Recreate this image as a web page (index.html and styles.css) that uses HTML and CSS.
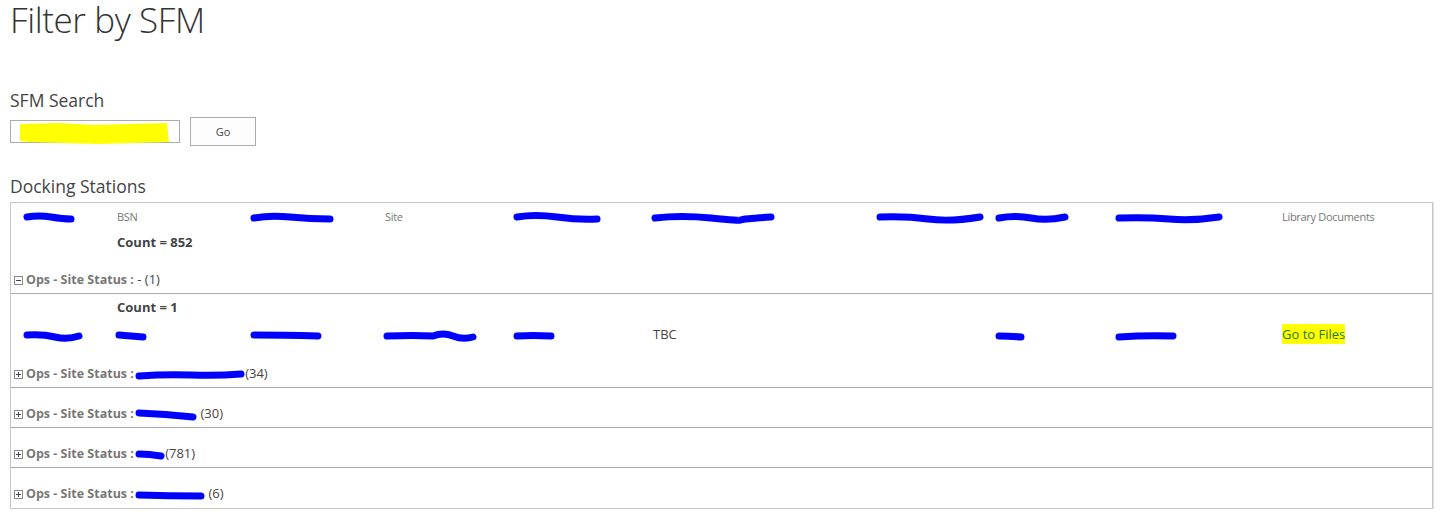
FILE: index.html
```html
<!DOCTYPE html>
<html><head><meta charset="UTF-8" /><link rel="stylesheet" href="styles.css"><title>Filter by SFM</title></head>
<body>
<div class="page">
	<h1 class="title">Filter by SFM</h1>

	<h2 class="section">SFM Search</h2>
	<div class="search">
		<div class="field">
			<!-- highlighter over the typed value -->
			<svg width="152" height="22" viewBox="0 0 152 22"><path class="hl" d="M1 2 L40 1 L75 3 L110 2 L148 1 L150 20 L115 21 L80 22 L45 21 L10 20 L1 19 Z" /></svg>
		</div>
		<button class="go">Go</button>
	</div>

	<h2 class="section">Docking Stations</h2>
	<table class="list">
		<colgroup>
			<col class="c1"><col class="c2"><col class="c3"><col class="c4"><col class="c5">
			<col class="c6"><col class="c7"><col class="c8"><col class="c9"><col class="c10">
		</colgroup>
		<tr class="head">
			<td class="first"><svg class="mark" width="52" height="12"><path d="M4 5 Q16 3 28 5 T48 7" /></svg></td>
			<td>BSN</td>
			<td><svg class="mark" width="84" height="12"><path d="M4 6 Q20 3 40 5 T80 7" /></svg></td>
			<td>Site</td>
			<td><svg class="mark" width="88" height="12"><path d="M4 5 Q22 2 44 5 T84 7" /></svg></td>
			<td><svg class="mark" width="124" height="14"><path d="M4 7 Q30 4 60 7 T90 9 T120 6" /></svg></td>
			<td><svg class="mark" width="108" height="12"><path d="M4 5 Q30 4 52 7 T104 5" /></svg></td>
			<td><svg class="mark" width="74" height="12"><path d="M4 6 Q20 3 36 6 T70 5" /></svg></td>
			<td><svg class="mark" width="108" height="12"><path d="M4 6 Q30 5 54 7 T104 5" /></svg></td>
			<td>Library Documents</td>
		</tr>
		<tr class="count">
			<td class="first"></td>
			<td colspan="9"><b>Count = 852</b></td>
		</tr>
		<tr class="group">
			<td colspan="10"><div class="gh"><span class="tog minus"></span><b>Ops - Site Status :</b> <span class="val">- (1)</span></div></td>
		</tr>
		<tr class="count sub">
			<td class="first"></td>
			<td colspan="9"><b>Count = 1</b></td>
		</tr>
		<tr class="row">
			<td class="first"><svg class="mark" width="60" height="12"><path d="M4 5 Q20 4 32 7 T56 6" /></svg></td>
			<td><svg class="mark" width="32" height="12"><path d="M4 5 Q16 6 28 7" /></svg></td>
			<td><svg class="mark" width="72" height="12"><path d="M4 5 Q34 5 68 6" /></svg></td>
			<td><svg class="mark" width="94" height="14"><path d="M4 7 Q30 6 50 7 Q60 3 70 7 T90 8" /></svg></td>
			<td><svg class="mark" width="42" height="12"><path d="M4 6 Q20 5 38 6" /></svg></td>
			<td>TBC</td>
			<td></td>
			<td><svg class="mark" width="30" height="12"><path d="M4 6 Q14 6 26 7" /></svg></td>
			<td><svg class="mark" width="62" height="12"><path d="M4 7 Q30 5 58 6" /></svg></td>
			<td><a class="files" href="#">Go to Files</a></td>
		</tr>
		<tr class="group">
			<td colspan="10"><div class="gh"><span class="tog"></span><b>Ops - Site Status : <svg class="mark" width="110" height="12"><path d="M4 7 Q30 5 56 6 T106 5" /></svg></b><span class="val">(34)</span></div></td>
		</tr>
		<tr class="group">
			<td colspan="10"><div class="gh"><span class="tog"></span><b>Ops - Site Status : <svg class="mark" width="62" height="14"><path d="M4 5 Q30 6 58 9" /></svg></b> <span class="val">(30)</span></div></td>
		</tr>
		<tr class="group">
			<td colspan="10"><div class="gh"><span class="tog"></span><b>Ops - Site Status : <svg class="mark" width="30" height="12"><path d="M4 5 Q14 5 26 7" /></svg></b><span class="val">(781)</span></div></td>
		</tr>
		<tr class="group last">
			<td colspan="10"><div class="gh"><span class="tog"></span><b>Ops - Site Status : <svg class="mark" width="70" height="14"><path d="M4 7 Q34 8 66 8" /></svg></b> <span class="val">(6)</span></div></td>
		</tr>
	</table>
</div>
</body></html>
```
FILE: styles.css
```css
body { margin: 0; background: #fff; color: #444;
	font-family: "Segoe UI", "Open Sans", sans-serif;
}
.page { padding-left: 10px; width: 1423px; }
.title { margin: 0; font-size: 35px; line-height: 39px; font-weight: 300; color: #333; letter-spacing: -0.4px; }
.section { margin: 0; font-size: 17.5px; line-height: 24px; font-weight: 400; color: #444; }
.title + .section { margin-top: 49px; }
.search { display: flex; align-items: center; gap: 10px; margin: 5px 0 28px; }
.field { width: 168px; height: 21px; border: 1px solid #ababab; padding: 0; }
.field svg { display: block; margin: 1px 0 0 8px; }
.hl { fill: #ffff00; }
.go { width: 66px; height: 29px; border: 1px solid #ababab; background: #fdfdfd;
	font-family: inherit; font-size: 11px; color: #444; padding: 0; }

.list { margin-top: 4px; width: 1423px; table-layout: fixed; border-collapse: separate; border-spacing: 0;
	border: 1px solid #c6c6c6; box-shadow: 1px 1px 0 #dedede; font-size: 13px; }
.c1 { width: 106px } .c2 { width: 135px } .c3 { width: 133px } .c4 { width: 130px }
.c5 { width: 138px } .c6 { width: 225px } .c7 { width: 119px } .c8 { width: 120px }
.c9 { width: 165px } .c10 { width: 150px }
.list td { padding: 0; white-space: nowrap; vertical-align: middle; }
.list td.first { padding-left: 14px; }
.head td { height: 26px; color: #777; font-size: 11px; letter-spacing: -0.3px; }
.count td { height: 25px; }
.count.sub td { height: 26px; }
.count b { color: #444; }
.row td { height: 28px; color: #444; }
.group td { padding: 0 0 0 2px; border-bottom: 1px solid #ababab; }
.group.last td { border-bottom: none; }
.gh { box-sizing: border-box; height: 39px; padding-top: 17px; line-height: 16px; overflow: hidden; }
.group.last .gh { height: 40px; }
.group b { color: #777; font-size: 12.5px; }
.group .val { color: #444; }
.tog { display: inline-block; width: 7px; height: 7px; border: 1px solid #8a8a8a; margin: 0 3px 0 1px;
	vertical-align: -1px; position: relative; background: #fff; }
.tog::before { content: ""; position: absolute; left: 1px; top: 3px; width: 5px; height: 1px; background: #444; }
.tog::after { content: ""; position: absolute; left: 3px; top: 1px; width: 1px; height: 5px; background: #444; }
.tog.minus::after { display: none; }
.mark { vertical-align: middle; margin: -4px 0 -4px -2px; }
.mark path { fill: none; stroke: #0000ff; stroke-width: 7; stroke-linecap: round; stroke-linejoin: round; }
.files { color: #1f7a1f; background: #ffff00; text-decoration: none; padding: 1px 0; }
```
